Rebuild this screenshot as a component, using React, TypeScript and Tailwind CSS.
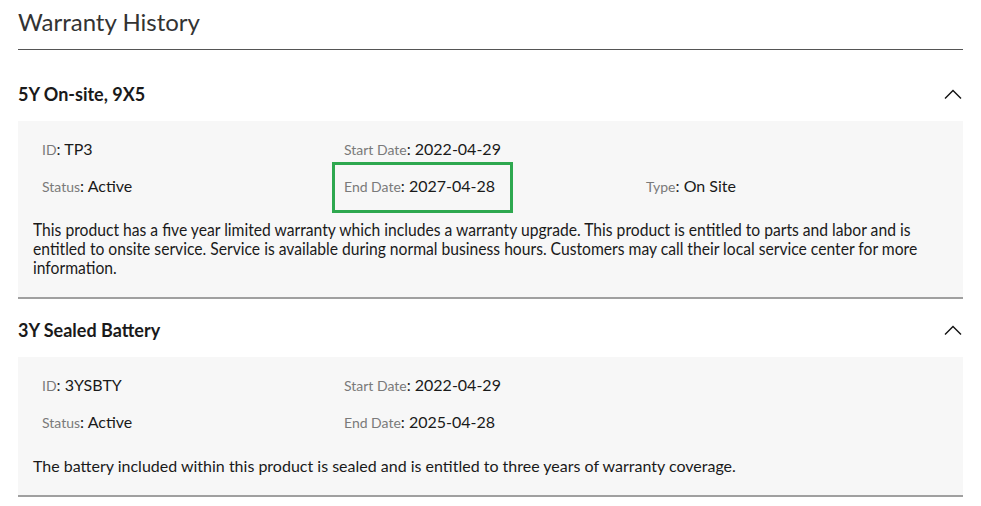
import { ReactNode } from 'react';

interface Field {
    label: string;
    value: string;
    highlight?: boolean;
}

interface Warranty {
    name: string;
    fields: Field[];
    description: string;
    condensed?: boolean;
}

const warranties: Warranty[] = [
    {
        name: '5Y On-site, 9X5',
        fields: [
            { label: 'ID', value: 'TP3' },
            { label: 'Start Date', value: '2022-04-29' },
            { label: '', value: '' },
            { label: 'Status', value: 'Active' },
            { label: 'End Date', value: '2027-04-28', highlight: true },
            { label: 'Type', value: 'On Site' },
        ],
        description:
            'This product has a five year limited warranty which includes a warranty upgrade. This product is entitled to parts and labor and is entitled to onsite service. Service is available during normal business hours. Customers may call their local service center for more information.',
        condensed: true,
    },
    {
        name: '3Y Sealed Battery',
        fields: [
            { label: 'ID', value: '3YSBTY' },
            { label: 'Start Date', value: '2022-04-29' },
            { label: '', value: '' },
            { label: 'Status', value: 'Active' },
            { label: 'End Date', value: '2025-04-28' },
        ],
        description:
            'The battery included within this product is sealed and is entitled to three years of warranty coverage.',
    },
];

function ChevronUp() {
    return (
        <svg width="18" height="10" viewBox="0 0 18 10" fill="none" className="block">
            <path d="M1 9.5 L9 1.5 L17 9.5" stroke="#111" strokeWidth="1.4" />
        </svg>
    );
}

function FieldCell({ field }: { field: Field }) {
    if (!field.label) return <div />;
    const content: ReactNode = (
        <span className="leading-5">
            <span className="text-[14px] text-[#7a7a7a]">{field.label}</span>
            <span className="text-[16px] text-[#1a1a1a]">: {field.value}</span>
        </span>
    );
    return (
        <div className="relative h-5 flex items-center">
            {content}
            {field.highlight && (
                <div className="absolute left-[-12px] top-[-14px] w-[181px] h-[51px] border-[3px] border-[#2ea84f]" />
            )}
        </div>
    );
}

function WarrantySection({ warranty, first }: { warranty: Warranty; first: boolean }) {
    return (
        <section>
            <div className={`flex items-center justify-between pb-[15px] ${first ? 'pt-[32px]' : 'pt-[19px]'}`}>
                <h3 className="text-[18px] leading-6 font-bold text-[#1a1a1a]">{warranty.name}</h3>
                <div className="pr-[1px]">
                    <ChevronUp />
                </div>
            </div>
            <div className="bg-[#f7f7f7] border-b-2 border-[#a0a0a0] pt-[18px] pb-[20px]">
                <div className="grid grid-cols-[302px_302px_302px] gap-y-[17px] pl-6">
                    {warranty.fields.map((f, i) => (
                        <FieldCell key={i} field={f} />
                    ))}
                </div>
                <div className="px-[15px] pt-6 overflow-hidden">
                    {warranty.condensed ? (
                        <p className="text-[18px] leading-[19px] text-[#1a1a1a] w-[1052px] origin-left scale-x-[0.87]">
                            {warranty.description}
                        </p>
                    ) : (
                        <p className="text-[16px] leading-[19px] text-[#1a1a1a]">{warranty.description}</p>
                    )}
                </div>
            </div>
        </section>
    );
}

export default function App() {
    return (
        <div className="w-[981px] h-[506px] bg-white overflow-hidden font-['Lato','Liberation_Sans',sans-serif]">
            <div className="ml-[18px] w-[945px]">
                <div className="border-b border-[#555] pt-[6px] pb-[11px]">
                    <h2 className="text-[24px] leading-8 text-[#333]">Warranty History</h2>
                </div>
                {warranties.map((w, i) => (
                    <WarrantySection key={w.name} warranty={w} first={i === 0} />
                ))}
            </div>
        </div>
    );
}
